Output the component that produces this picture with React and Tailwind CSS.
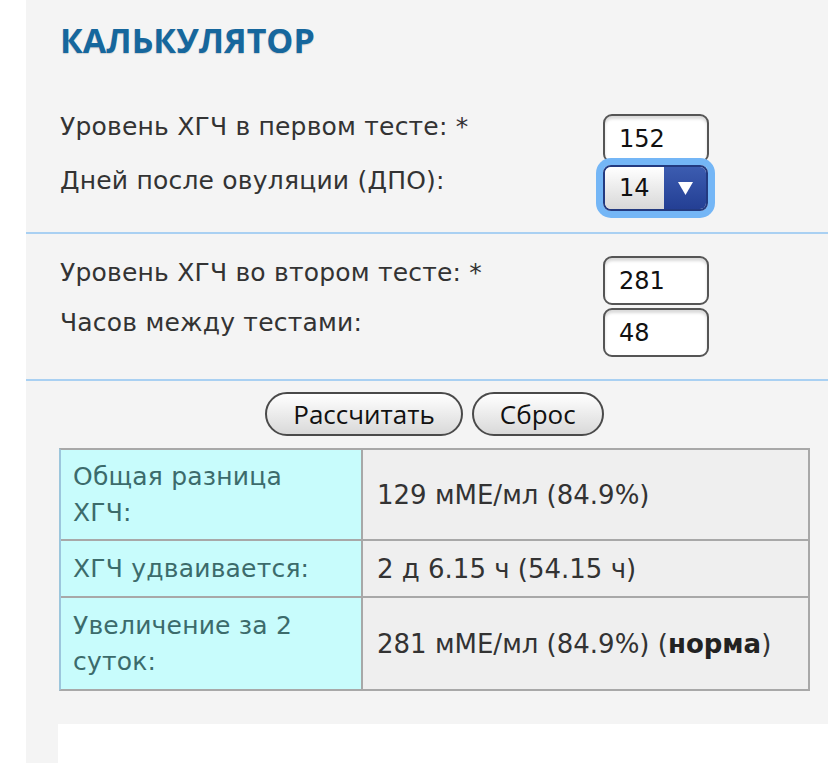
import React from "react";

const label = "text-[25px] leading-[26px] text-[#333] font-['DejaVu_Sans',sans-serif] tracking-[0.2px]";
const field =
  "w-[106px] h-[49px] rounded-[9px] border-2 border-[#555] bg-white shadow-[inset_0_3px_3px_rgba(0,0,0,0.15)] px-[14px] text-[24px] text-[#111] font-['DejaVu_Sans',sans-serif] outline-none";

function Field({ value }) {
  return <input className={field} value={value} readOnly />;
}

function DaySelect() {
  return (
    <div className="w-[105px] h-[46px] rounded-[8px] border-2 border-[#233a80] shadow-[0_0_0_7px_#74b6f6] flex overflow-hidden">
      <div className="flex-1 bg-gradient-to-b from-white to-[#d8d8d8] flex items-center px-[14px] text-[24px] text-[#111] font-['DejaVu_Sans',sans-serif]">
        14
      </div>
      <div className="w-[42px] bg-gradient-to-b from-[#3c5cb0] to-[#243f94] flex items-center justify-center">
        <svg width="15" height="13" viewBox="0 0 15 13">
          <path d="M0 0 H15 L7.5 13 Z" fill="#fff" />
        </svg>
      </div>
    </div>
  );
}

function Row({ text, children, labelClass = "" }) {
  return (
    <div className="grid grid-cols-[543px_110px] items-start">
      <div className={`${label} ${labelClass}`}>{text}</div>
      <div>{children}</div>
    </div>
  );
}

const btn =
  "h-[44px] rounded-full border-2 border-[#4a4a4a] bg-gradient-to-b from-white to-[#d9d9d9] text-[26px] leading-[30px] text-[#111] font-['Open_Sans',sans-serif] px-[26px]";

const leftCell =
  "w-[302px] bg-[#c8fcfc] text-[#3c6b6b] pl-[12px] pr-[26px] border-r-2 border-[#a8a8a8] flex items-center tracking-[0.2px]";
const rightCell = "flex-1 bg-[#efefef] text-[#333] text-[26px] px-[14px] flex items-center";

export default function App() {
  return (
    <div className="min-h-[763px] bg-white pl-[26px]">
      <div className="bg-[#f4f4f4] min-h-[763px] flex flex-col">
        <h2 className="pl-[34px] pt-[19px] text-[34px] leading-[42px] font-bold text-[#16679d] font-['Open_Sans',sans-serif] [text-shadow:0_1px_1px_rgba(0,0,0,0.15)]">
          КАЛЬКУЛЯТОР
        </h2>

        <div className="pl-[34px] pt-[53px] pb-[21px] border-b-2 border-[#a9d0f2] flex flex-col gap-[2px]">
          <Row text="Уровень ХГЧ в первом тесте: *">
            <Field value="152" />
          </Row>
          <Row text="Дней после овуляции (ДПО):" labelClass="pt-[3px]">
            <DaySelect />
          </Row>
        </div>

        <div className="pl-[34px] pt-[22px] pb-[22px] border-b-2 border-[#a9d0f2] flex flex-col gap-[3px]">
          <Row text="Уровень ХГЧ во втором тесте: *" labelClass="pt-[4px]">
            <Field value="281" />
          </Row>
          <Row text="Часов между тестами:" labelClass="pt-[2px]">
            <Field value="48" />
          </Row>
        </div>

        <div className="pl-[33px] pr-[18px] pt-[11px]">
          <div className="flex justify-center gap-[9px]">
            <button className={btn}>Рассчитать</button>
            <button className={btn}>Сброс</button>
          </div>

          <div className="mt-[12px] border-2 border-[#a8a8a8] border-l-[#9cc6dc] text-[25px] leading-[36px] font-['DejaVu_Sans',sans-serif]">
            <div className="flex h-[91px] border-b-2 border-[#a8a8a8]">
              <div className={leftCell}>Общая разница ХГЧ:</div>
              <div className={rightCell}>129 мМЕ/мл (84.9%)</div>
            </div>
            <div className="flex h-[57px] border-b-2 border-[#a8a8a8]">
              <div className={leftCell}>ХГЧ удваивается:</div>
              <div className={rightCell}>2 д 6.15 ч (54.15 ч)</div>
            </div>
            <div className="flex h-[91px]">
              <div className={leftCell}>Увеличение за 2 суток:</div>
              <div className={rightCell}>
                <span>
                  281 мМЕ/мл (84.9%) (<b className="text-[#222]">норма</b>)
                </span>
              </div>
            </div>
          </div>
        </div>

        <div className="mt-[33px] ml-[32px] flex-1 bg-white min-h-[39px]"></div>
      </div>
    </div>
  );
}
